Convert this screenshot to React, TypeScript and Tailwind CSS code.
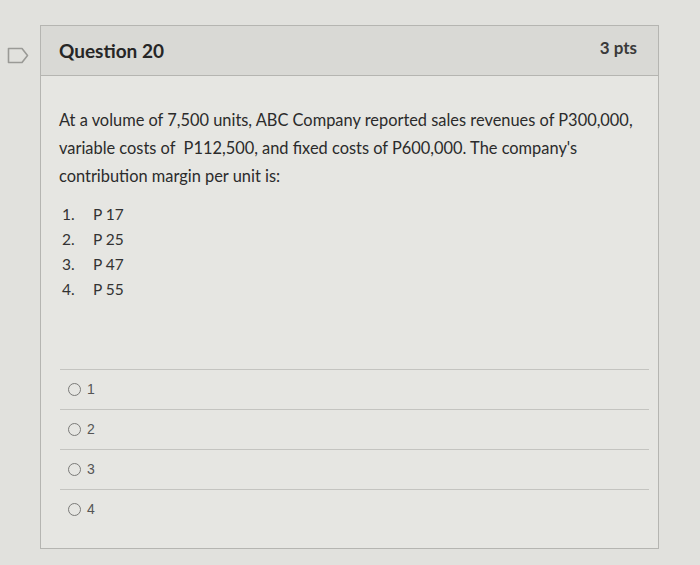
import React from 'react';

const choices = ['P 17', 'P 25', 'P 47', 'P 55'];
const answers = ['1', '2', '3', '4'];

const FlagIcon: React.FC = () => (
  <svg width="22" height="17" viewBox="0 0 22 17" fill="none">
    <path d="M1.5 1.5 H15 L20.5 8.5 L15 15.5 H1.5 Z" stroke="#9a9a96" strokeWidth="1.6" strokeLinejoin="round" />
  </svg>
);

const App: React.FC = () => {
  return (
    <div className="w-[700px] h-[565px] bg-[#e1e1dd] overflow-hidden flex" style={{ fontFamily: 'Lato, "Open Sans", sans-serif' }}>
      {/* gutter with the flag */}
      <div className="w-[40px] shrink-0 pt-[47px] pl-[7px]">
        <FlagIcon />
      </div>

      <div className="w-[619px] mt-[25px] h-[524px] border border-[#b5b5b1] bg-[#e6e6e2] flex flex-col">
        <div className="h-[50px] shrink-0 bg-[#d9d9d5] border-b border-[#b5b5b1] flex items-center justify-between pl-[18px] pr-[21px]">
          <h2 className="text-[19px] font-bold text-[#262626] mt-[2px]">Question 20</h2>
          <span className="text-[17px] font-bold text-[#3a3a3a] -mt-[6px]">3 pts</span>
        </div>

        <div className="flex-1 pt-[30px] pl-[18px] pr-[9px] pb-[19px] flex flex-col">
          <p className="text-[16.4px] leading-[28px] text-[#2b2b2b] whitespace-nowrap">
            At a volume of 7,500 units, ABC Company reported sales revenues of P300,000,
            <br />
            variable costs of&nbsp; P112,500, and fixed costs of P600,000. The company's
            <br />
            contribution margin per unit is:
          </p>

          <ol className="mt-[12px] text-[15.5px] leading-[25px] text-[#333]">
            {choices.map((c, i) => (
              <li key={c} className="flex">
                <span className="w-[34px] pl-[3px]">{i + 1}.</span>
                <span>{c}</span>
              </li>
            ))}
          </ol>

          <div className="mt-auto pl-[1px]">
            {answers.map((a) => (
              <label
                key={a}
                className="h-[40px] flex items-center gap-[6px] pl-[8px] text-[14px] text-[#555] border-t border-[#c4c4c0]"
                style={{ fontFamily: '"Liberation Sans", Arial, sans-serif' }}
              >
                <span className="w-[13px] h-[13px] rounded-full border-[1.5px] border-[#7a7a78]" />
                {a}
              </label>
            ))}
          </div>
        </div>
      </div>
    </div>
  );
};

export default App;
